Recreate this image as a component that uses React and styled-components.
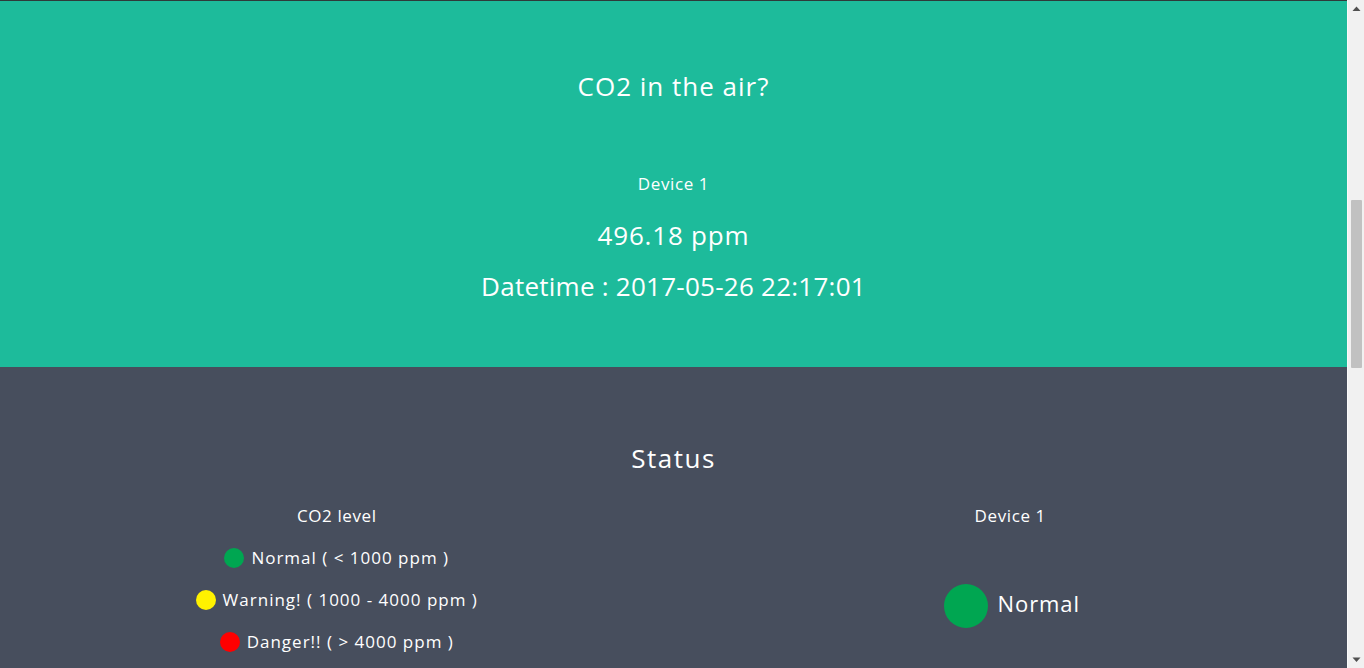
import React from "react";
import styled, { createGlobalStyle } from "styled-components";

const Global = createGlobalStyle`
  html, body { margin: 0; padding: 0; height: 100%; }
  body { font-family: "Open Sans", "Liberation Sans", sans-serif; overflow: hidden; }
  #root { height: 100%; }
`;

const Frame = styled.div`
  display: flex;
  height: 668px;
  overflow: hidden;
`;

const Main = styled.main`
  flex: 1;
  min-width: 0;
  display: flex;
  flex-direction: column;
  color: #ffffff;
`;

const TopEdge = styled.div`
  height: 1px;
  background: #2f3a3a;
`;

const Hero = styled.section`
  background: #1dbb9b;
  height: 366px;
  box-sizing: border-box;
  padding-top: 69px;
  display: flex;
  flex-direction: column;
  align-items: center;
  text-align: center;
`;

const Title = styled.h2`
  margin: 0;
  font-size: 26px;
  line-height: 32px;
  font-weight: 400;
  letter-spacing: ${(p) => p.$ls || "1px"};
`;

const Label = styled.div`
  font-size: 17px;
  line-height: 24px;
  letter-spacing: 0.6px;
  margin-top: ${(p) => p.$mt || "0"};
`;

const Reading = styled.div`
  font-size: 26px;
  line-height: 32px;
  letter-spacing: ${(p) => p.$ls || "0.8px"};
  margin-top: ${(p) => p.$mt || "0"};
`;

const StatusSection = styled.section`
  flex: 1;
  background: #474e5d;
  padding-top: 75px;
  display: flex;
  flex-direction: column;
  align-items: center;
`;

const Columns = styled.div`
  align-self: stretch;
  display: grid;
  grid-template-columns: 1fr 1fr;
  margin-top: 30px;
`;

const Column = styled.div`
  display: flex;
  flex-direction: column;
  align-items: center;
`;

const LegendList = styled.ul`
  list-style: none;
  margin: 18px 0 0;
  padding: 0;
  display: flex;
  flex-direction: column;
  align-items: center;
  gap: 18px;
`;

const LegendItem = styled.li`
  display: flex;
  align-items: center;
  gap: 7px;
  font-size: 17px;
  line-height: 24px;
  letter-spacing: 1px;
`;

const Dot = styled.span`
  width: ${(p) => p.$size}px;
  height: ${(p) => p.$size}px;
  border-radius: 50%;
  background: ${(p) => p.$color};
  flex: none;
`;

const DeviceStatus = styled.div`
  margin-top: 56px;
  margin-left: 3px;
  display: flex;
  align-items: center;
  gap: 10px;
`;

const StatusText = styled.span`
  font-size: 22px;
  line-height: 30px;
  letter-spacing: 0.9px;
  margin-bottom: 6px;
`;

const Scrollbar = styled.div`
  width: 17px;
  flex: none;
  background: #f1f1f1;
  border-left: 1px solid #fafafa;
  box-sizing: border-box;
  display: flex;
  flex-direction: column;
  align-items: center;
`;

const ArrowButton = styled.div`
  height: 17px;
  width: 100%;
  display: flex;
  align-items: center;
  justify-content: center;
`;

const Thumb = styled.div`
  width: 11px;
  height: 168px;
  margin-top: ${(p) => p.$offset}px;
  background: #c1c1c1;
  border-radius: 1px;
`;

const Spacer = styled.div`
  flex: 1;
`;

const Arrow = ({ down }) => (
  <svg width="9" height="6" viewBox="0 0 9 6">
    <path d={down ? "M0.5 0.5 L8.5 0.5 L4.5 5 Z" : "M4.5 0.5 L8.5 5 L0.5 5 Z"} fill="#505050" />
  </svg>
);

const legend = [
  { color: "#00a651", text: "Normal ( < 1000 ppm )" },
  { color: "#fff200", text: "Warning! ( 1000 - 4000 ppm )" },
  { color: "#ff0000", text: "Danger!! ( > 4000 ppm )" },
];

export default function App() {
  return (
    <>
      <Global />
      <Frame>
        <Main>
          <TopEdge />
          <Hero>
            <Title>CO2 in the air?</Title>
            <Label $mt="70px">Device 1</Label>
            <Reading $mt="23px">496.18 ppm</Reading>
            <Reading $mt="19px" $ls="0.25px">Datetime : 2017-05-26 22:17:01</Reading>
          </Hero>
          <StatusSection>
            <Title $ls="1.5px">Status</Title>
            <Columns>
              <Column>
                <Label>CO2 level</Label>
                <LegendList>
                  {legend.map((l) => (
                    <LegendItem key={l.text}>
                      <Dot $size={20} $color={l.color} />
                      {l.text}
                    </LegendItem>
                  ))}
                </LegendList>
              </Column>
              <Column>
                <Label>Device 1</Label>
                <DeviceStatus>
                  <Dot $size={44} $color="#00a651" />
                  <StatusText>Normal</StatusText>
                </DeviceStatus>
              </Column>
            </Columns>
          </StatusSection>
        </Main>
        <Scrollbar>
          <ArrowButton>
            <Arrow />
          </ArrowButton>
          <Thumb $offset={183} />
          <Spacer />
          <ArrowButton>
            <Arrow down />
          </ArrowButton>
        </Scrollbar>
      </Frame>
    </>
  );
}
